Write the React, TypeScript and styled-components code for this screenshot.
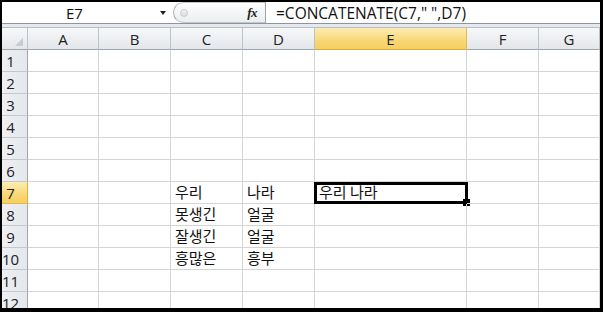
import React from "react";
import styled, { createGlobalStyle } from "styled-components";

const GlobalStyle = createGlobalStyle`
  html, body { margin: 0; padding: 0; background: #fff; }
  * { box-sizing: border-box; }
`;

const Frame = styled.div`
  width: 603px;
  height: 312px;
  border-style: solid;
  border-color: #000;
  border-width: 2px 3px 4px 2px;
  overflow: hidden;
  display: flex;
  flex-direction: column;
  font-family: "Open Sans", "Noto Sans CJK KR", sans-serif;
`;

const FormulaBar = styled.div`
  height: 22px;
  display: flex;
  align-items: stretch;
  background: #fff;
  border-bottom: 1px solid #8e949b;
  flex-shrink: 0;
`;

const NameBox = styled.div`
  width: 145px;
  display: flex;
  align-items: center;
  justify-content: center;
  font-size: 15px;
  color: #111;
`;

const Dropdown = styled.div`
  width: 26px;
  display: flex;
  align-items: center;
  justify-content: flex-start;
  padding-left: 13px;
  &::after {
    content: "";
    border-left: 3.5px solid transparent;
    border-right: 3.5px solid transparent;
    border-top: 4px solid #222;
  }
`;

const Pill = styled.div`
  width: 92px;
  display: flex;
  align-items: center;
  justify-content: space-between;
  padding: 0 8px 0 6px;
  border-left: 1px solid #a9adb2;
  border-top: 1px solid #c4c7cb;
  border-bottom: 1px solid #c4c7cb;
  border-radius: 12px 0 0 12px;
  background: linear-gradient(#fdfdfd, #eceef0);
`;

const Knob = styled.span`
  width: 8px;
  height: 8px;
  border-radius: 50%;
  border: 1px solid #c8cbcf;
  background: linear-gradient(#f4f4f4, #dcdcdc);
`;

const Fx = styled.span`
  font-family: "Liberation Serif", serif;
  font-style: italic;
  font-weight: bold;
  font-size: 13px;
  color: #222;
  letter-spacing: -0.5px;
`;

const Formula = styled.div`
  flex: 1;
  display: flex;
  align-items: center;
  padding-left: 10px;
  border-left: 1px solid #a0a4aa;
  font-size: 15.5px;
  color: #111;
  white-space: pre;
`;

const Gap = styled.div`
  height: 4px;
  flex-shrink: 0;
  background: #e6e9ed;
  border-bottom: 1px solid #b8bdc4;
`;

const Sheet = styled.div`
  display: grid;
  grid-template-columns: 26px 71px 72px 72px 72px 152px 72px 1fr;
  grid-auto-rows: 22px;
`;

const HeaderCell = styled.div<{ $active?: boolean }>`
  display: flex;
  align-items: center;
  justify-content: center;
  font-size: 15px;
  color: #222;
  border-right: 1px solid ${(p) => (p.$active ? "#e8b94a" : "#bcc2ca")};
  border-bottom: 1px solid ${(p) => (p.$active ? "#e0ad3a" : "#9ea6b0")};
  background: ${(p) =>
    p.$active
      ? "linear-gradient(#fcecb4, #f8d777 60%, #f6cf5f)"
      : "linear-gradient(#f7f8fa, #e3e6ea)"};
`;

const Corner = styled(HeaderCell)`
  position: relative;
  &::after {
    content: "";
    position: absolute;
    right: 4px;
    bottom: 3px;
    border-left: 8px solid transparent;
    border-bottom: 8px solid #c7ccd2;
  }
`;

const RowHead = styled.div<{ $active?: boolean }>`
  display: flex;
  align-items: center;
  justify-content: center;
  padding-right: 8px;
  font-size: 15px;
  color: #222;
  border-right: 1px solid ${(p) => (p.$active ? "#e0ad3a" : "#9ea6b0")};
  border-bottom: 1px solid ${(p) => (p.$active ? "#e8b94a" : "#c3c8ce")};
  background: ${(p) =>
    p.$active
      ? "linear-gradient(#fcecb4, #f8d777 60%, #f6cf5f)"
      : "linear-gradient(90deg, #eef0f3, #e4e7eb)"};
`;

const Cell = styled.div<{ $selected?: boolean }>`
  position: relative;
  display: flex;
  align-items: flex-end;
  padding: 0 0 2px 4px;
  border-right: 1px solid #d4d4d4;
  border-bottom: 1px solid #d4d4d4;
  font-family: "Noto Sans CJK KR", "Open Sans", sans-serif;
  font-size: 15px;
  line-height: 18px;
  color: #111;
  white-space: nowrap;
  ${(p) =>
    p.$selected &&
    `
    &::before {
      content: "";
      position: absolute;
      left: -1px;
      top: 0;
      right: -2px;
      bottom: -1px;
      border: 3px solid #000;
      pointer-events: none;
    }
    &::after {
      content: "";
      position: absolute;
      right: -4px;
      bottom: -3px;
      width: 7px;
      height: 7px;
      background: #000;
    }
  `}
`;

const columns = ["A", "B", "C", "D", "E", "F", "G"];

const data: Record<number, Record<string, string>> = {
  7: { C: "우리", D: "나라", E: "우리 나라" },
  8: { C: "못생긴", D: "얼굴" },
  9: { C: "잘생긴", D: "얼굴" },
  10: { C: "흥많은", D: "흥부" },
};

export default function App() {
  const rows = Array.from({ length: 12 }, (_, i) => i + 1);
  return (
    <>
      <GlobalStyle />
      <Frame>
        <FormulaBar>
          <NameBox>E7</NameBox>
          <Dropdown />
          <Pill>
            <Knob />
            <Fx>fx</Fx>
          </Pill>
          <Formula>=CONCATENATE(C7," ",D7)</Formula>
        </FormulaBar>
        <Gap />
        <Sheet>
          <Corner />
          {columns.map((c) => (
            <HeaderCell key={c} $active={c === "E"}>
              {c}
            </HeaderCell>
          ))}
          {rows.map((r) => (
            <React.Fragment key={r}>
              <RowHead $active={r === 7}>{r}</RowHead>
              {columns.map((c) => (
                <Cell key={c} $selected={r === 7 && c === "E"}>
                  {data[r]?.[c] ?? ""}
                </Cell>
              ))}
            </React.Fragment>
          ))}
        </Sheet>
      </Frame>
    </>
  );
}
